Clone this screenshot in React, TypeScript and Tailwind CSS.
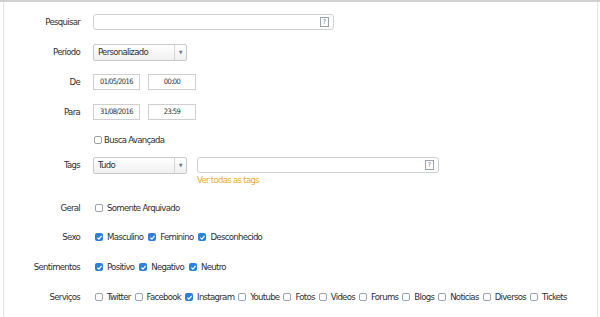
import { ReactNode } from 'react'

const font = { fontFamily: '"DejaVu Sans Condensed", "Liberation Sans", sans-serif' }

function Help() {
    return (
        <span className="flex h-[10px] w-[9px] items-center justify-center border border-gray-400 text-[7px] leading-none tracking-normal text-gray-500">?</span>
    )
}

function Box({ checked }: { checked?: boolean }) {
    if (checked) {
        return (
            <span className="flex h-[8px] w-[8px] shrink-0 items-center justify-center rounded-[2px] bg-[#2d7fd8]">
                <svg viewBox="0 0 10 10" className="h-[7px] w-[7px]">
                    <path d="M2 5.2 L4.2 7.3 L8 2.8" fill="none" stroke="white" strokeWidth="1.8" />
                </svg>
            </span>
        )
    }
    return <span className="h-[8px] w-[8px] shrink-0 rounded-[2px] border border-gray-400 bg-white" />
}

function Check({ label, checked }: { label: string; checked?: boolean }) {
    return (
        <span className="flex items-center gap-[4px]">
            <Box checked={checked} />
            <span>{label}</span>
        </span>
    )
}

function Row({ label, children, className }: { label?: string; children: ReactNode; className?: string }) {
    return (
        <div className={`flex items-center ${className ?? ''}`}>
            <div className="w-[76px] shrink-0 text-right">{label}</div>
            <div className="ml-[13px] flex items-center">{children}</div>
        </div>
    )
}

function Select({ value }: { value: string }) {
    return (
        <div className="flex h-[17px] w-[94px] items-center rounded-[2px] border border-[#c8c8c8] bg-gradient-to-b from-white to-[#f0f0f0]">
            <span className="flex-1 pl-[4px]">{value}</span>
            <span className="flex h-full w-[12px] items-center justify-center border-l border-[#d4d4d4] text-[5px] text-gray-500">▼</span>
        </div>
    )
}

function Field({ value, w }: { value: string; w: string }) {
    return (
        <div className={`flex h-[16px] ${w} items-center justify-center border border-[#cfcfcf] bg-white text-[7.5px] tracking-[-0.6px]`}>{value}</div>
    )
}

export default function App() {
    return (
        <div className="h-[317px] w-[600px] overflow-hidden bg-white text-[9.5px] tracking-[-0.7px] text-[#2f2f2f]" style={font}>
            <div className="h-[2px] bg-[#d0d0d0]" />
            <div className="ml-[3px] mr-[2px] h-[315px] border-l border-r border-[#e2e2e2] pt-[12px]">
                <Row label="Pesquisar">
                    <div className="flex h-[16px] w-[241px] items-center justify-end rounded-[3px] border border-[#d0d0d0] bg-white pr-[4px]">
                        <Help />
                    </div>
                </Row>
                <Row label="Período" className="mt-[14px]">
                    <Select value="Personalizado" />
                </Row>
                <Row label="De" className="mt-[13px]">
                    <div className="flex gap-[8px]">
                        <Field value="01/05/2016" w="w-[47px]" />
                        <Field value="00:00" w="w-[48px]" />
                    </div>
                </Row>
                <Row label="Para" className="mt-[14px]">
                    <div className="flex gap-[8px]">
                        <Field value="31/08/2016" w="w-[47px]" />
                        <Field value="23:59" w="w-[48px]" />
                    </div>
                </Row>
                <Row className="mt-[13px] h-[14px]">
                    <span className="flex items-center gap-[2px] pl-[1px]">
                        <Box />
                        <span>Busca Avançada</span>
                    </span>
                </Row>
                <div className="mt-[10px] flex items-start">
                    <div className="flex h-[17px] w-[76px] shrink-0 items-center justify-end">Tags</div>
                    <div className="ml-[13px] flex items-start gap-[10px]">
                        <Select value="Tudo" />
                        <div>
                            <div className="flex h-[16px] w-[242px] items-center justify-end rounded-[3px] border border-[#d0d0d0] bg-white pr-[4px]">
                                <Help />
                            </div>
                            <div className="h-[13px] leading-[13px] text-[#e6ad2e]">Ver todas as tags</div>
                        </div>
                    </div>
                </div>
                <Row label="Geral" className="mt-[15px] h-[14px]">
                    <span className="pl-[2px]">
                        <Check label="Somente Arquivado" />
                    </span>
                </Row>
                <Row label="Sexo" className="mt-[15px] h-[14px]">
                    <div className="flex gap-[5px] pl-[2px]">
                        <Check label="Masculino" checked />
                        <Check label="Feminino" checked />
                        <Check label="Desconhecido" checked />
                    </div>
                </Row>
                <Row label="Sentimentos" className="mt-[16px] h-[14px]">
                    <div className="flex gap-[5px] pl-[2px]">
                        <Check label="Positivo" checked />
                        <Check label="Negativo" checked />
                        <Check label="Neutro" checked />
                    </div>
                </Row>
                <Row label="Serviços" className="mt-[16px] h-[14px]">
                    <div className="flex gap-[4px] pl-[2px]">
                        <Check label="Twitter" />
                        <Check label="Facebook" />
                        <Check label="Instagram" checked />
                        <Check label="Youtube" />
                        <Check label="Fotos" />
                        <Check label="Videos" />
                        <Check label="Forums" />
                        <Check label="Blogs" />
                        <Check label="Noticias" />
                        <Check label="Diversos" />
                        <Check label="Tickets" />
                    </div>
                </Row>
            </div>
        </div>
    )
}
